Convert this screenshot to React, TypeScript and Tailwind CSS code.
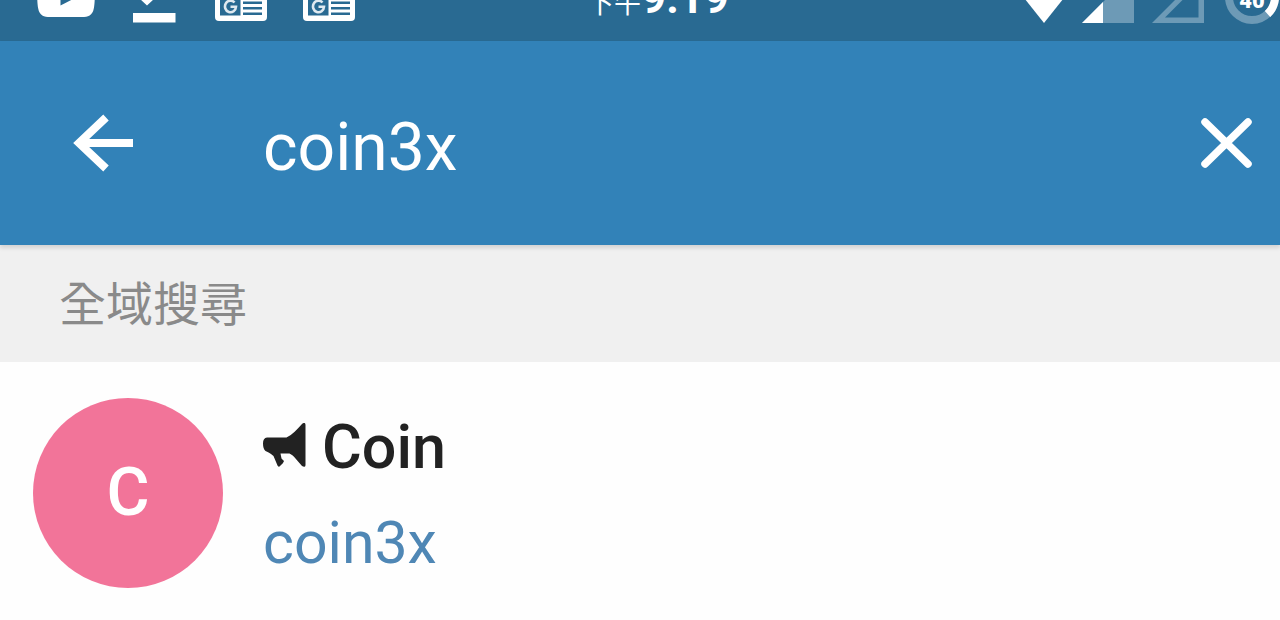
import React, { useState } from "react";

function VideoIcon() {
  return (
    <svg className="h-[60px] w-[58px] shrink-0" viewBox="37 -36 58 60" aria-hidden="true">
      <path
        fill="#fff"
        d="M38.500 -17C40 -23 47 -24 66 -24S92 -23 93.500 -17C95 -10 95.200 2 93.800 8.500C92.500 15.500 88 17 82 17H50C44 17 39.500 15.500 38.200 8.500C36.800 2 37 -10 38.500 -17Z"
      />
      <path fill="#296a92" d="M60.500 -12V5.500L78 -3.500Z" />
    </svg>
  );
}

function DownloadIcon() {
  return (
    <svg className="h-[60px] w-[43px] shrink-0" viewBox="133 -36 43 60" aria-hidden="true">
      <path fill="#fff" d="M141 -31H153V-14H168L147 5.500L126 -14H141Z" />
      <path fill="#fff" d="M133 13H175.500V22.500H133Z" />
    </svg>
  );
}

function NewsIcon() {
  return (
    <svg className="h-[60px] w-[52px] shrink-0" viewBox="215 -36 52 60" aria-hidden="true">
      <path fill="#fff" d="M219 -24H263Q267 -24 267 -20V17Q267 21 263 21H219Q215 21 215 17V-20Q215 -24 219 -24Z" />
      <path fill="#296a92" d="M220 -4H240.500V15.500H220ZM243 1.500H262V4H243ZM243 7H262V9.500H243ZM243 12.500H262V15H243Z" />
      <path
        fill="none"
        stroke="#dfe9f0"
        strokeWidth="2.600"
        d="M234.500 2.500A5.500 5.800 0 1 0 236 6.800H230.500"
      />
    </svg>
  );
}

function WifiIcon() {
  return (
    <svg className="h-[60px] w-[70px] shrink-0" viewBox="1009 -36 70 60" aria-hidden="true">
      <path fill="#fff" d="M1044 23L1009 -21Q1044 -45 1079 -21Z" />
    </svg>
  );
}

function SignalIcon() {
  return (
    <svg className="h-[60px] w-[52px] shrink-0" viewBox="1082 -36 52 60" aria-hidden="true">
      <path fill="#6d9ab6" d="M1082 23L1134 -29V23Z" />
      <path fill="#fff" d="M1082 23L1103 2V23Z" />
    </svg>
  );
}

function NoSignalIcon() {
  return (
    <svg className="h-[60px] w-[52px] shrink-0" viewBox="1152 -36 52 60" aria-hidden="true">
      <path fill="#6d9ab6" fillRule="evenodd" d="M1152 23L1204 -29V23ZM1165 17.500H1198.500V-16Z" />
    </svg>
  );
}

function BatteryIcon() {
  return (
    <div className="relative h-[60px] w-[54px] shrink-0">
      <svg className="h-full w-full" viewBox="1225 -36 54 60" aria-hidden="true">
        <circle cx="1252" cy="-3" r="23" fill="none" stroke="#6d9ab6" strokeWidth="8" />
        <path fill="none" stroke="#fff" strokeWidth="8" d="M1252 -26A23 23 0 0 1 1267.500 14" />
      </svg>
      <span className="absolute inset-x-0 bottom-[10px] text-center text-[22px] leading-[26px] font-black text-white">
        40
      </span>
    </div>
  );
}

function StatusBar() {
  return (
    <div className="flex h-[41px] items-end justify-between overflow-hidden bg-[#296a92] pr-px pb-[17px] pl-[37px]">
      <div className="flex flex-1 items-end">
        <VideoIcon />
        <div className="ml-[38px] flex items-end gap-[39px]">
          <DownloadIcon />
          <div className="flex items-end gap-9">
            <NewsIcon />
            <NewsIcon />
          </div>
        </div>
      </div>
      <div className="flex items-baseline text-white">
        <span className="text-[27px] leading-[40px] font-normal">下午</span>
        <span className="text-[44px] leading-[48px] font-bold">9:19</span>
      </div>
      <div className="flex flex-1 items-end justify-end">
        <WifiIcon />
        <div className="ml-[3px] flex items-end gap-[18px]">
          <SignalIcon />
          <NoSignalIcon />
        </div>
        <div className="ml-[21px]">
          <BatteryIcon />
        </div>
      </div>
    </div>
  );
}

function SearchBar() {
  const [query, setQuery] = useState("coin3x");
  return (
    <header className="relative flex h-[204px] items-center bg-[#3282b8] pr-7 pl-[73px] shadow-[0_3px_4px_rgba(0,0,0,0.12)]">
      <button type="button" aria-label="返回" className="shrink-0">
        <svg className="h-[60px] w-[60px]" viewBox="0 0 60 60" fill="none" stroke="#fff" strokeWidth="8" aria-hidden="true">
          <path d="M60 30H8" />
          <path d="M33 4.500L6 30L33 55.500" />
        </svg>
      </button>
      <input
        type="text"
        aria-label="搜尋"
        value={query}
        onChange={(e) => setQuery(e.target.value)}
        className="ml-[130px] h-22 min-w-0 flex-1 bg-transparent pt-2 text-[66px] leading-[80px] text-white outline-none"
      />
      <button type="button" aria-label="清除" onClick={() => setQuery("")} className="shrink-0">
        <svg className="h-[52px] w-[52px]" viewBox="0 0 52 52" fill="none" stroke="#fff" strokeWidth="7.500" strokeLinecap="round" aria-hidden="true">
          <path d="M5 5L48 47M48 5L5 47" />
        </svg>
      </button>
    </header>
  );
}

function MegaphoneIcon() {
  return (
    <svg className="h-[48px] w-[43px] shrink-0" viewBox="0 0 43 48" fill="#222" aria-hidden="true">
      <path d="M4 14.500H23.500C29.500 11.500 34 6.500 39 1Q40.500 -.3 41.700 0Q42.500 .5 42.500 2V42Q42.500 43.500 41.500 43.800Q40.500 44 39 43C34.500 38 31 32.500 26.500 30.500H17.500L18.500 35.500L21 38Q20.500 40 16.500 43.500Q15 44 14.500 42.500L10.500 33L8 31Q6 29.500 2.500 28Q0 26 0 20.500Q0 15 4 14.500Z" />
    </svg>
  );
}

export default function App() {
  return (
    <div className="min-h-screen bg-[#fefefe] font-[Roboto,'Noto_Sans_CJK_TC',sans-serif]">
      <StatusBar />
      <SearchBar />
      <main>
        <h2 className="flex h-[117px] items-center bg-[#f0f0f0] pt-0.5 pl-[59px] text-[47px] leading-[64px] text-[#8a8a8a]">
          全域搜尋
        </h2>
        <a href="#coin3x" className="flex items-center gap-10 px-[33px] pt-9 pb-8">
          <span className="flex size-[190px] shrink-0 items-center justify-center rounded-full bg-[#f27499] text-[66px] leading-[80px] font-medium text-white">
            C
          </span>
          <span className="flex flex-col gap-4 pt-1">
            <span className="flex items-center gap-4 text-[61px] leading-[80px] font-medium text-[#222]">
              <MegaphoneIcon />
              Coin
            </span>
            <span className="text-[59px] leading-[80px] text-[#4f87b5]">coin3x</span>
          </span>
        </a>
      </main>
    </div>
  );
}
